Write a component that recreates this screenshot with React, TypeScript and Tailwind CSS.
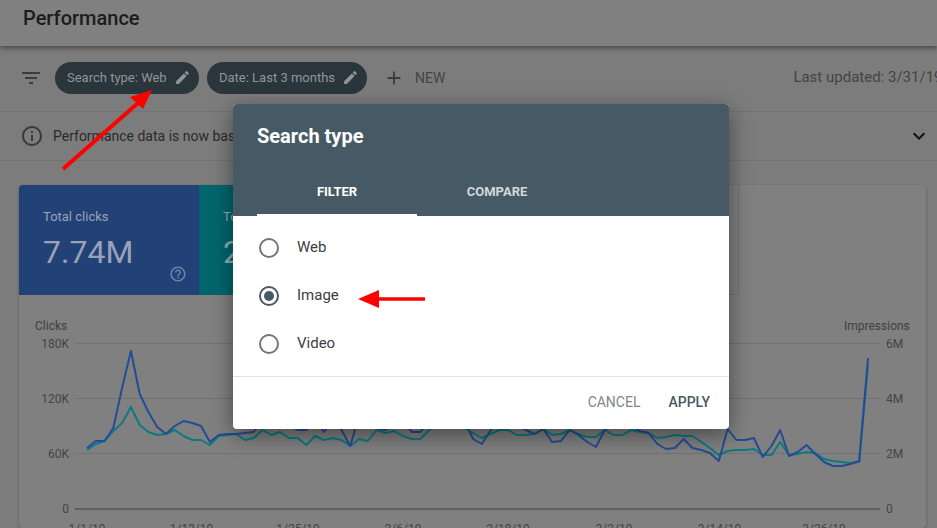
import { MdAdd, MdEdit, MdFilterList, MdHelpOutline, MdInfoOutline, MdKeyboardArrowDown } from 'react-icons/md';

const BLUE_LINE = [448, 441, 441, 428, 388, 351, 394, 412, 427, 434, 426, 421, 423, 426, 442, 435, 434, 434, 433, 432, 420, 425, 428, 425, 430, 430, 420, 432, 420, 430, 446, 415, 425, 428, 430, 425, 420, 432, 432, 420, 420, 425, 420, 420, 439, 444, 430, 420, 420, 425, 430, 434, 429, 442, 441, 430, 435, 442, 447, 430, 425, 425, 425, 431, 433, 444, 449, 448, 439, 448, 450, 453, 461, 429, 440, 440, 438, 457, 446, 430, 456, 452, 445, 454, 462, 466, 466, 464, 461, 358];
const TEAL_LINE = [450, 444, 441, 431, 423, 407, 425, 432, 435, 434, 430, 436, 440, 440, 445, 436, 435, 434, 440, 438, 430, 435, 432, 438, 438, 445, 436, 440, 438, 440, 446, 439, 441, 430, 433, 431, 436, 439, 439, 430, 425, 425, 425, 428, 433, 438, 434, 430, 430, 435, 435, 434, 429, 435, 434, 430, 434, 437, 437, 430, 435, 435, 430, 432, 433, 438, 437, 435, 436, 436, 442, 448, 455, 451, 450, 450, 449, 455, 455, 442, 455, 454, 452, 453, 459, 461, 462, 463, 462, 365];

const toPoints = (values: number[]) =>
    values.map((y, i) => `${(87 + i * 8.775 - 19).toFixed(1)},${y - 295}`).join(' ');

const GRID = [
    { y: 343.5, left: '180K', right: '6M' },
    { y: 398.5, left: '120K', right: '4M' },
    { y: 453.5, left: '60K', right: '2M' },
];

const DATES = [
    { x: 87, label: '1/1/19' },
    { x: 191.5, label: '1/13/19' },
    { x: 298, label: '1/25/19' },
    { x: 403, label: '2/6/19' },
    { x: 508, label: '2/18/19' },
    { x: 614, label: '3/2/19' },
    { x: 719.5, label: '3/14/19' },
    { x: 824, label: '3/26/19' },
];

const Chip = ({ label, width }: { label: string; width: string }) => (
    <div className={`flex shrink-0 items-center justify-between h-8 pl-3 pr-2 rounded-full bg-[#2a363b] text-[13px] text-[#8f9598] ${width}`}>
        <span className="whitespace-nowrap">{label}</span>
        <MdEdit className="shrink-0 text-[#8f9598]" size={17} />
    </div>
);

const Radio = ({ label, checked }: { label: string; checked?: boolean }) => (
    <div className="flex items-center h-12 pl-[26px]">
        <div className={`flex items-center justify-center w-5 h-5 rounded-full border-2 ${checked ? 'border-[#455a64]' : 'border-[#757575]'}`}>
            {checked && <div className="w-2.5 h-2.5 rounded-full bg-[#455a64]" />}
        </div>
        <span className="ml-[18px] -mt-0.5 text-[15px] text-[#3c4043]">{label}</span>
    </div>
);

const Chart = () => (
    <svg className="block" width="907" height="233" style={{ fontFamily: 'Roboto, sans-serif' }}>
        <text x="16" y="35" fontSize="12" fill="#3f3f3f">Clicks</text>
        <text x="825" y="35" fontSize="12" fill="#3f3f3f">Impressions</text>
        {GRID.map((row) => (
            <g key={row.left}>
                <line x1="56" x2="861" y1={row.y - 295} y2={row.y - 295} stroke="#727272" strokeWidth="1" />
                <text x="50" y={row.y - 291} fontSize="12" fill="#444" textAnchor="end">{row.left}</text>
                <text x="867" y={row.y - 291} fontSize="12" fill="#444">{row.right}</text>
            </g>
        ))}
        <line x1="56" x2="861" y1="214" y2="214" stroke="#545454" strokeWidth="1.5" />
        <text x="50" y="218" fontSize="12" fill="#444" textAnchor="end">0</text>
        <text x="867" y="218" fontSize="12" fill="#444">0</text>
        <polyline points={toPoints(TEAL_LINE)} fill="none" stroke="#0b7b80" strokeWidth="2" strokeLinejoin="round" />
        <polyline points={toPoints(BLUE_LINE)} fill="none" stroke="#254c92" strokeWidth="2" strokeLinejoin="round" />
        {DATES.map((d) => (
            <text key={d.label} x={d.x - 19} y="238" fontSize="12" fill="#444" textAnchor="middle">{d.label}</text>
        ))}
    </svg>
);

export default function App() {
    return (
        <div className="relative w-[937px] h-[528px] overflow-hidden bg-[#7c7c7c] font-['Roboto',sans-serif]">
            {/* Page header */}
            <header className="relative z-10 flex items-center h-[46px] pl-[23px] pb-2.5 bg-[#808080] shadow-[0_2px_5px_rgba(0,0,0,0.45)]">
                <h1 className="text-xl font-medium text-[#1c1c1c]">Performance</h1>
            </header>

            {/* Filters */}
            <div className="flex items-center h-[66px] pl-[19px] pb-0.5 border-b border-[#727272] overflow-hidden">
                <MdFilterList className="shrink-0 text-[#3c3c3c]" size={24} />
                <div className="flex shrink-0 gap-2 ml-3">
                    <Chip label="Search type: Web" width="w-[144px]" />
                    <Chip label="Date: Last 3 months" width="w-[160px]" />
                </div>
                <MdAdd className="shrink-0 ml-4 text-[#3c3c3c]" size={22} />
                <span className="shrink-0 ml-2.5 text-sm text-[#444]">NEW</span>
                <span className="shrink-0 ml-[348px] text-[15px] text-[#444] whitespace-nowrap">Last updated: 3/31/19</span>
            </div>

            {/* Notice */}
            <div className="flex items-center h-[49px] pl-[20px] pr-[6px] border-b border-[#727272]">
                <MdInfoOutline className="text-[#3a3a3a]" size={24} />
                <span className="ml-[9px] text-sm text-[#2a2a2a]">Performance data is now based on canonical URL</span>
                <MdKeyboardArrowDown className="ml-auto text-[#111]" size={24} />
            </div>

            {/* Metrics and chart */}
            <section className="mt-6 ml-[19px] w-[907px] bg-[#808080] rounded-sm shadow-[0_1px_3px_rgba(0,0,0,0.25)]">
                <div className="flex h-[110px]">
                    <div className="relative w-[180px] pl-6 pt-[22px] bg-[#224176] rounded-tl-sm">
                        <div className="text-[13px] text-[#98a3b7]">Total clicks</div>
                        <div className="mt-[5px] text-[32px] leading-10 text-[#98a3b7]">7.74M</div>
                        <MdHelpOutline className="absolute right-[12px] bottom-3 text-[#6f83a6]" size={18} />
                    </div>
                    <div className="w-[180px] pl-6 pt-[22px] bg-[#00666c]">
                        <div className="text-[13px] text-[#8fb0b3]">Total impressions</div>
                        <div className="mt-[5px] text-[32px] leading-10 text-[#8fb0b3]">2M</div>
                    </div>
                    <div className="w-[360px] border-r border-b border-[#727272]" />
                </div>
                <Chart />
            </section>

            {/* Search type dialog */}
            <div className="absolute left-[233px] top-[104px] w-[496px] h-[325px] rounded-sm bg-white overflow-hidden shadow-[0_6px_22px_rgba(0,0,0,0.45)]">
                <div className="h-[112px] bg-[#465a65] px-6">
                    <h2 className="pt-[20px] text-xl font-bold text-white leading-[24px]">Search type</h2>
                    <div className="flex mt-[31px]">
                        <div className="flex items-start justify-center w-40 h-[37px] pt-[3px] border-b-2 border-white text-[13px] font-bold text-white">FILTER</div>
                        <div className="flex items-start justify-center w-40 h-[37px] pt-[3px] text-[13px] font-bold text-[#d3d8da]">COMPARE</div>
                    </div>
                </div>
                <div className="h-[161px] pt-2 border-b border-[#e0e0e0]">
                    <Radio label="Web" />
                    <Radio label="Image" checked />
                    <Radio label="Video" />
                </div>
                <div className="flex justify-end gap-7 pr-[19px] pt-[15px] text-sm">
                    <span className="text-[#80868b]">CANCEL</span>
                    <span className="font-medium text-[#455a64]">APPLY</span>
                </div>
            </div>

            {/* Annotation arrows */}
            <svg className="absolute left-0 top-0 z-20" width="937" height="528">
                <line x1="63" y1="169" x2="138" y2="103" stroke="#ff0000" strokeWidth="4" />
                <polygon points="152,90 130,97 143,109" fill="#ff0000" />
                <line x1="378" y1="299" x2="425" y2="299" stroke="#ff0000" strokeWidth="3.5" />
                <polygon points="358,299 379,290 379,308" fill="#ff0000" />
            </svg>
        </div>
    );
}
